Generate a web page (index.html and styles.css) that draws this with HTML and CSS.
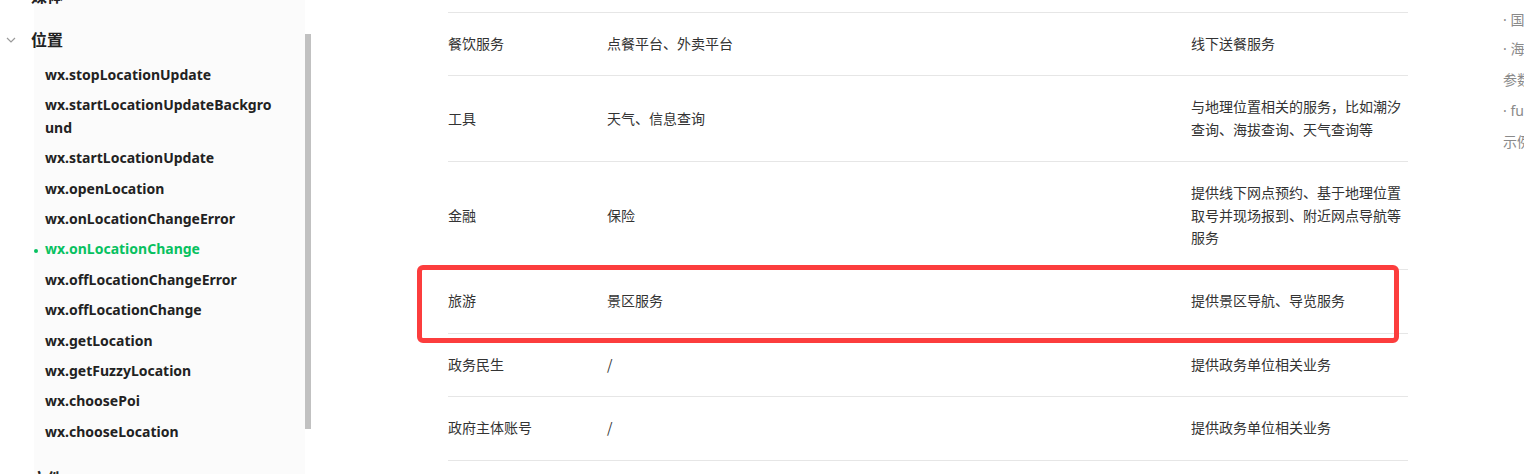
FILE: index.html
```html
<!DOCTYPE html>
<html lang="zh-CN">
<head>
<meta charset="utf-8">
<title>位置</title>
<link rel="stylesheet" href="styles.css">
</head>
<body>
<div class="page">
  <div class="sidebar">
    <nav class="nav">
      <div class="section">
        <div class="section-title">媒体</div>
      </div>
      <div class="section open">
        <div class="section-title">
          <svg class="chevron" width="10" height="6" viewBox="0 0 10 6"><path d="M1 1 L5 5 L9 1" fill="none" stroke="#9a9a9a" stroke-width="1.2"/></svg>
          位置
        </div>
        <ul class="items">
          <li>wx.stopLocationUpdate</li>
          <li>wx.startLocationUpdateBackground</li>
          <li>wx.startLocationUpdate</li>
          <li>wx.openLocation</li>
          <li>wx.onLocationChangeError</li>
          <li class="active">wx.onLocationChange</li>
          <li>wx.offLocationChangeError</li>
          <li>wx.offLocationChange</li>
          <li>wx.getLocation</li>
          <li>wx.getFuzzyLocation</li>
          <li>wx.choosePoi</li>
          <li>wx.chooseLocation</li>
        </ul>
      </div>
      <div class="section">
        <div class="section-title">文件</div>
      </div>
    </nav>
    <div class="scrolltrack"><div class="thumb"></div></div>
  </div>

  <main class="main">
    <div class="table-wrap">
      <table class="cat-table">
        <colgroup>
          <col class="c1"><col class="c2"><col class="c3">
        </colgroup>
        <tbody>
          <tr><td>餐饮服务</td><td>点餐平台、外卖平台</td><td>线下送餐服务</td></tr>
          <tr><td>工具</td><td>天气、信息查询</td><td>与地理位置相关的服务，比如潮汐查询、海拔查询、天气查询等</td></tr>
          <tr><td>金融</td><td>保险</td><td>提供线下网点预约、基于地理位置取号并现场报到、附近网点导航等服务</td></tr>
          <tr><td>旅游</td><td>景区服务</td><td>提供景区导航、导览服务</td></tr>
          <tr><td>政务民生</td><td>/</td><td>提供政务单位相关业务</td></tr>
          <tr><td>政府主体账号</td><td>/</td><td>提供政务单位相关业务</td></tr>
        </tbody>
      </table>
      <div class="highlight"></div>
    </div>
  </main>

  <aside class="aside">
    <p>· 国内坐标</p>
    <p>· 海外坐标</p>
    <p>参数说明</p>
    <p>· fun</p>
    <p>示例代码</p>
  </aside>
</div>
</body>
</html>
```
FILE: styles.css
```css
html, body {
  margin: 0;
  padding: 0;
  background: #fff;
}
body {
  width: 1524px;
  height: 474px;
  overflow: hidden;
  font-family: "Noto Sans", "Noto Sans CJK SC", sans-serif;
  color: #333;
}
.page {
  display: flex;
  align-items: flex-start;
  height: 474px;
}

/* Sidebar */
.sidebar {
  display: flex;
  flex: none;
  width: 312px;
  height: 474px;
  background: linear-gradient(to right, #fff 34px, #fbfbfb 34px);
}
.nav {
  width: 305px;
  margin-top: -29px;
}
.section + .section {
  margin-top: 3px;
}
.section-title {
  position: relative;
  padding: 10px 0 8px 31px;
  font-size: 16px;
  line-height: 24px;
  font-weight: 700;
  color: #222;
  font-family: "Noto Sans CJK SC", sans-serif;
}
.section:first-child .section-title {
  padding-top: 12px;
}
.open .section-title {
  padding-top: 9px;
  padding-bottom: 9px;
}
.chevron {
  position: absolute;
  left: 6px;
  top: 19px;
}
.items {
  list-style: none;
  margin: 0;
  padding: 0 0 6px 45px;
  width: 228px;
}
.items li {
  position: relative;
  padding: 4px 0;
  font-size: 14px;
  line-height: 22.4px;
  font-weight: 700;
  color: #222;
  word-break: break-all;
}
.items li.active {
  color: #07c160;
}
.items li.active::before {
  content: "";
  position: absolute;
  left: -11px;
  top: 15px;
  width: 4px;
  height: 4px;
  border-radius: 50%;
  background: #07c160;
}
.scrolltrack {
  width: 7px;
  height: 474px;
  background: #fff;
}
.thumb {
  margin-top: 34px;
  width: 6px;
  height: 395px;
  background: #c1c1c1;
}

/* Main table */
.main {
  flex: none;
  padding-left: 136px;
  padding-top: 12px;
}
.table-wrap {
  position: relative;
  width: 960px;
}
.cat-table {
  width: 960px;
  border-collapse: collapse;
  table-layout: fixed;
  border-top: 1px solid #e6e6e6;
  font-family: "Noto Sans CJK SC", sans-serif;
  font-size: 14px;
  line-height: 22.4px;
  color: #333;
}
.c1 { width: 159px; }
.c2 { width: 584px; }
.c3 { width: 217px; }
.cat-table td {
  padding: 19px 0 21px;
  vertical-align: middle;
  border-bottom: 1px solid #e6e6e6;
}
.highlight {
  position: absolute;
  left: -31px;
  top: 253px;
  width: 982px;
  height: 78px;
  box-sizing: border-box;
  border: 5px solid #fc3d3d;
  border-radius: 6px;
}

/* Right aside */
.aside {
  flex: none;
  margin-left: 95px;
  padding-top: 7px;
  white-space: nowrap;
  font-family: "Noto Sans", "Noto Sans CJK SC", sans-serif;
  font-size: 14px;
  color: #8a8a8a;
}
.aside p {
  margin: 0;
  line-height: 31px;
}
.aside p:first-child {
  line-height: 26px;
}
```
